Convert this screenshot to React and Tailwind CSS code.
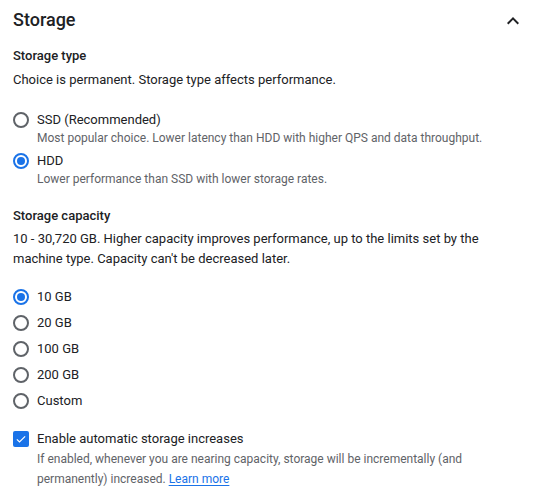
import { useState } from 'react'

function Radio({ checked }) {
  return (
    <span
      className={
        'flex h-4 w-4 shrink-0 items-center justify-center rounded-full border-2 ' +
        (checked ? 'border-[#1a73e8]' : 'border-[#5f6368]')
      }
    >
      {checked && <span className="h-2 w-2 rounded-full bg-[#1a73e8]" />}
    </span>
  )
}

function TypeOption({ label, desc, checked, onClick }) {
  return (
    <div className="cursor-pointer" onClick={onClick}>
      <div className="flex h-5 items-center gap-[8px]">
        <Radio checked={checked} />
        <span className="text-[13px] leading-5 text-[#202124]">{label}</span>
      </div>
      <div className="pl-6 text-xs leading-4 text-[#5f6368]">{desc}</div>
    </div>
  )
}

export default function App() {
  const [type, setType] = useState('hdd')
  const [size, setSize] = useState('10 GB')
  const [auto, setAuto] = useState(true)

  return (
    <div
      className="min-h-screen bg-white px-[13px] text-[#202124]"
      style={{ fontFamily: 'Roboto, "Liberation Sans", sans-serif' }}
    >
      <div className="flex h-[40px] items-center justify-between">
        <h2 className="text-[18px] font-medium leading-6">Storage</h2>
        <svg viewBox="0 0 24 24" className="-mr-1 mt-[2px] h-6 w-6 fill-[#202124]">
          <path d="M12 8l-6 6 1.41 1.41L12 10.83l4.59 4.58L18 14z" />
        </svg>
      </div>

      <div className="mt-[6px] text-[13px] font-medium leading-5">Storage type</div>
      <div className="mt-[4px] text-[13px] leading-5">
        Choice is permanent. Storage type affects performance.
      </div>

      <div className="mt-5 flex flex-col gap-[5px]">
        <TypeOption
          label="SSD (Recommended)"
          desc="Most popular choice. Lower latency than HDD with higher QPS and data throughput."
          checked={type === 'ssd'}
          onClick={() => setType('ssd')}
        />
        <TypeOption
          label="HDD"
          desc="Lower performance than SSD with lower storage rates."
          checked={type === 'hdd'}
          onClick={() => setType('hdd')}
        />
      </div>

      <div className="mt-[19px] text-[13px] font-medium leading-5">Storage capacity</div>
      <div className="mt-[3px] text-[13px] leading-5">
        10 - 30,720 GB. Higher capacity improves performance, up to the limits set by the
        machine type. Capacity can't be decreased later.
      </div>

      <div className="mt-[15px] flex flex-col">
        {['10 GB', '20 GB', '100 GB', '200 GB', 'Custom'].map((s) => (
          <div
            key={s}
            className="flex h-[26px] cursor-pointer items-center gap-[8px]"
            onClick={() => setSize(s)}
          >
            <Radio checked={size === s} />
            <span className="text-[13px] leading-5">{s}</span>
          </div>
        ))}
      </div>

      <div className="mt-[15px]">
        <div className="flex h-5 cursor-pointer items-center gap-[8px]" onClick={() => setAuto(!auto)}>
          <span
            className={
              'flex h-4 w-4 shrink-0 items-center justify-center rounded-[2px] ' +
              (auto ? 'bg-[#1a73e8]' : 'border-2 border-[#5f6368]')
            }
          >
            {auto && (
              <svg viewBox="0 0 16 16" className="h-3 w-3" fill="none" stroke="white" strokeWidth="1.6">
                <path d="M2.5 8.5l3.5 3.5 7.5-7.5" />
              </svg>
            )}
          </span>
          <span className="text-[13px] leading-5">Enable automatic storage increases</span>
        </div>
        <div className="pl-6 text-xs leading-5 text-[#5f6368]">
          If enabled, whenever you are nearing capacity, storage will be incrementally (and
          permanently) increased.{' '}
          <a href="#" className="text-[#1a73e8] underline underline-offset-2">
            Learn more
          </a>
        </div>
      </div>
    </div>
  )
}
